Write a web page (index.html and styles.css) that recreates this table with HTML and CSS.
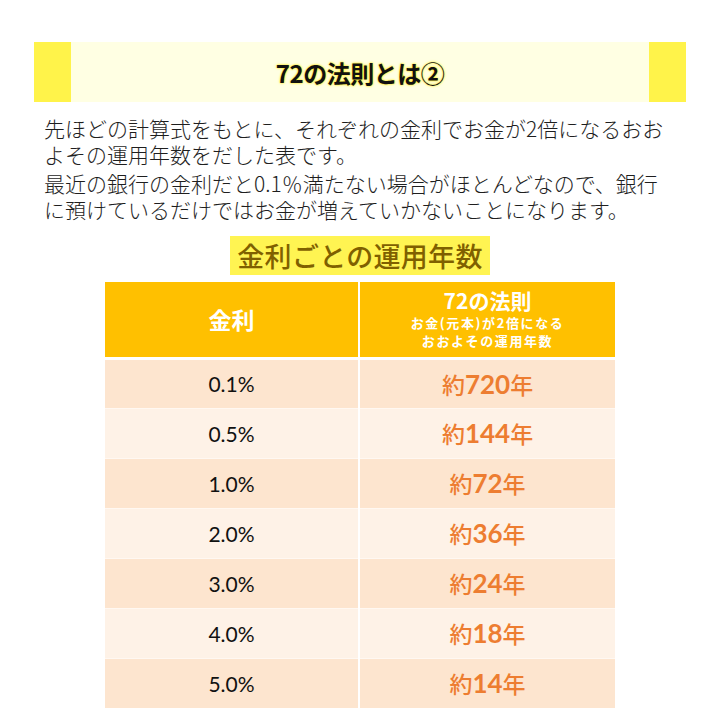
FILE: index.html
```html
<!DOCTYPE html>
<html lang="ja">
<head>
<meta charset="utf-8">
<title>72の法則とは②</title>
<link rel="stylesheet" href="styles.css">
</head>
<body>
<div class="page">
  <div class="title-band">
    <div class="band-side"></div>
    <h1 class="band-title">72の法則とは②</h1>
    <div class="band-side"></div>
  </div>
  <div class="intro">
    <p>先ほどの計算式をもとに、それぞれの金利でお金が2倍になるおおよその運用年数をだした表です。</p>
    <p>最近の銀行の金利だと0.1％満たない場合がほとんどなので、銀行に預けているだけではお金が増えていかないことになります。</p>
  </div>
  <div class="sub-wrap">
    <h2 class="subtitle">金利ごとの運用年数</h2>
  </div>
  <table class="rate-table">
    <thead>
      <tr>
        <th class="col-rate"><span class="th-main">金利</span></th>
        <th class="col-years">
          <span class="th-rule">72の法則</span>
          <span class="th-note">お金(元本)が2倍になる</span>
          <span class="th-note">おおよその運用年数</span>
        </th>
      </tr>
    </thead>
    <tbody>
      <tr class="odd"><td class="rate">0.1%</td><td class="years"><span class="yk">約</span><span class="num">720</span><span class="yk">年</span></td></tr>
      <tr class="even"><td class="rate">0.5%</td><td class="years"><span class="yk">約</span><span class="num">144</span><span class="yk">年</span></td></tr>
      <tr class="odd"><td class="rate">1.0%</td><td class="years"><span class="yk">約</span><span class="num">72</span><span class="yk">年</span></td></tr>
      <tr class="even"><td class="rate">2.0%</td><td class="years"><span class="yk">約</span><span class="num">36</span><span class="yk">年</span></td></tr>
      <tr class="odd"><td class="rate">3.0%</td><td class="years"><span class="yk">約</span><span class="num">24</span><span class="yk">年</span></td></tr>
      <tr class="even"><td class="rate">4.0%</td><td class="years"><span class="yk">約</span><span class="num">18</span><span class="yk">年</span></td></tr>
      <tr class="odd"><td class="rate">5.0%</td><td class="years"><span class="yk">約</span><span class="num">14</span><span class="yk">年</span></td></tr>
    </tbody>
  </table>
</div>
</body>
</html>
```

FILE: styles.css
```css
* { box-sizing: border-box; }
html, body { margin: 0; padding: 0; background: #ffffff; }
body {
  font-family: "Noto Sans CJK JP", "Noto Sans", sans-serif;
  color: #222222;
}
.page {
  width: 720px;
  height: 720px;
  overflow: hidden;
  padding-top: 42px;
}
.title-band {
  margin: 0 34px;
  height: 60px;
  display: flex;
  background: #ffffe3;
}
.band-side {
  width: 37px;
  background: #fff34a;
}
.band-title {
  flex: 1;
  margin: 0;
  display: flex;
  align-items: center;
  justify-content: center;
  font-size: 24px;
  font-weight: 700;
  color: #111111;
  letter-spacing: -0.5px;
  text-shadow: 0 0 2px #ffea00, 0 0 3px #fff060;
}
.intro {
  margin-top: 13px;
  padding: 0 42px 0 44px;
}
.intro p {
  margin: 0 0 3px 0;
  font-size: 21px;
  font-weight: 300;
  line-height: 26px;
  color: #1e1e1e;
}
.sub-wrap {
  display: flex;
  justify-content: center;
  margin-top: 14px;
}
.subtitle {
  margin: 0;
  width: 260px;
  height: 39px;
  background: #fff452;
  color: #7f6000;
  font-size: 27px;
  font-weight: 500;
  line-height: 39px;
  text-align: center;
  letter-spacing: 0.3px;
}
.rate-table {
  margin: 7px 0 0 105px;
  width: 510px;
  border-collapse: collapse;
}
.rate-table th {
  background: #ffc000;
  color: #ffffff;
  height: 76px;
  padding: 0;
  font-weight: 700;
  border-bottom: 3px solid #ffffff;
  vertical-align: middle;
}
.col-rate { width: 254px; border-right: 2px solid #ffffff; }
.th-main { font-size: 23px; }
.th-rule {
  display: block;
  font-size: 21px;
  line-height: 25px;
  margin-bottom: 1px;
}
.th-note {
  display: block;
  font-size: 13px;
  line-height: 18px;
  letter-spacing: 1.6px;
}
.rate-table td {
  height: 50px;
  padding: 0;
  text-align: center;
  vertical-align: middle;
  border-top: 1px solid #fff8f2;
}
.rate-table td.rate { border-right: 2px solid #ffffff; }
tr.odd td { background: #fde5cf; }
tr.even td { background: #fef2e7; }
.rate {
  font-family: Lato, "Open Sans", sans-serif;
  font-size: 21px;
  color: #111111;
}
.years {
  color: #ed7d31;
  font-weight: 700;
}
.yk {
  font-family: "Noto Sans CJK JP", sans-serif;
  font-size: 23px;
  font-weight: 500;
}
.num {
  font-family: Lato, "Open Sans", sans-serif;
  font-size: 26px;
  font-weight: 700;
}
```
